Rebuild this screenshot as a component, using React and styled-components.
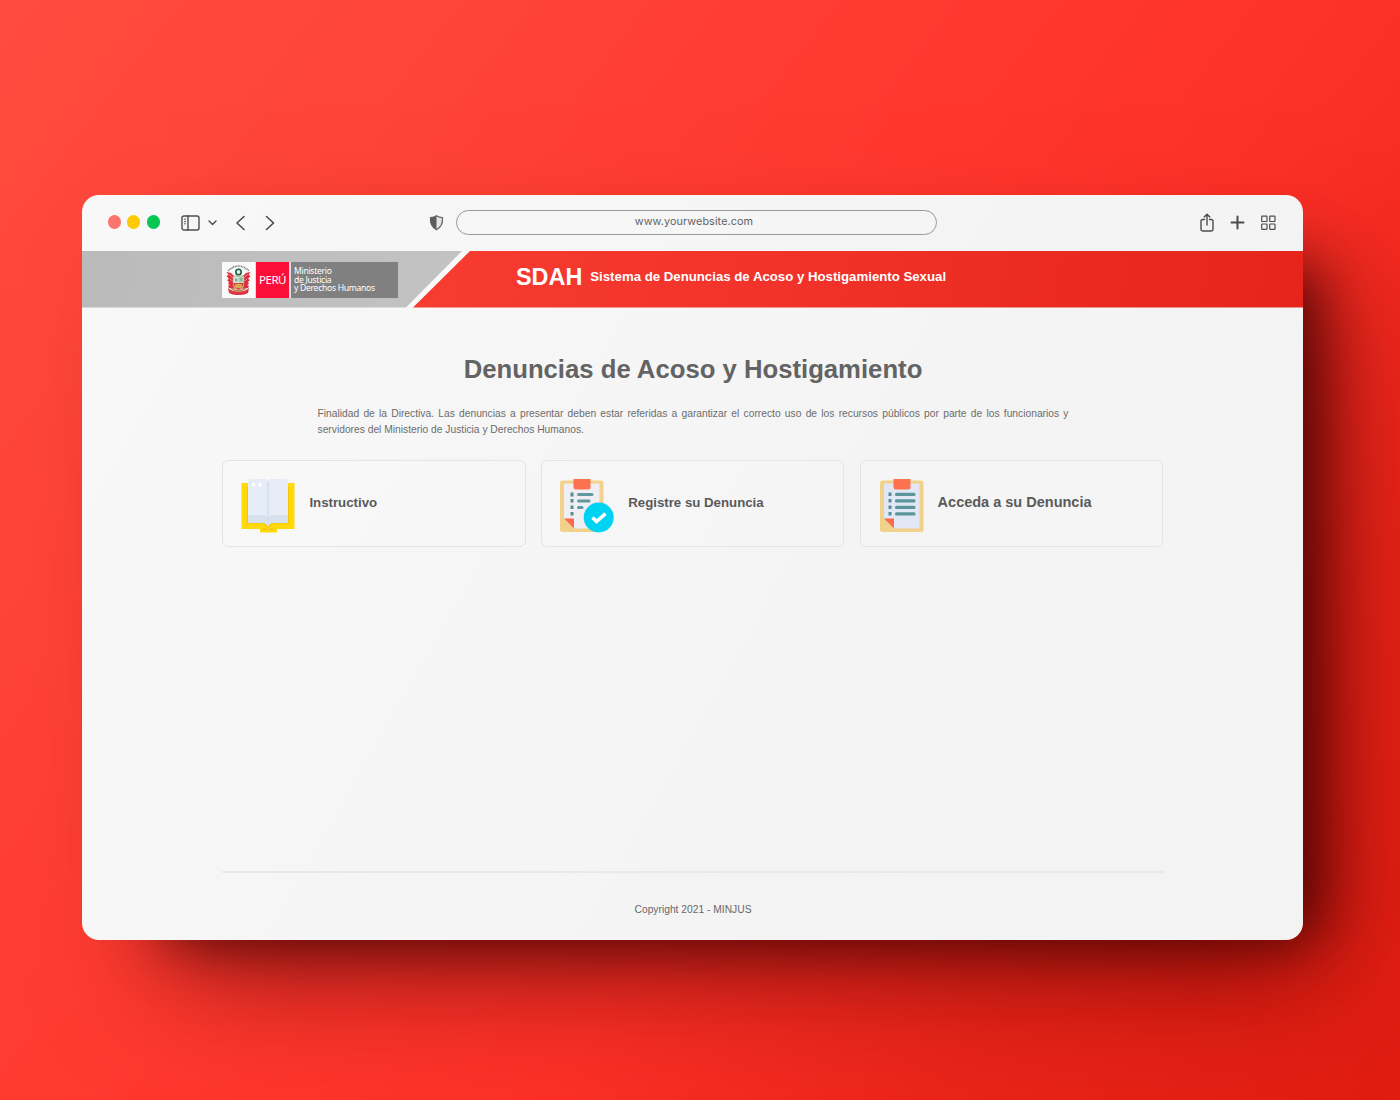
import React from "react";
import styled, { createGlobalStyle } from "styled-components";

const Global = createGlobalStyle`
  * { box-sizing: border-box; }
  body { margin: 0; font-family: "Liberation Sans", Arial, sans-serif; }
  svg { display: block; flex: none; }
`;

const Stage = styled.div`
  width: 1400px;
  height: 1100px;
  padding: 195px 97px 160px 82px;
  background: linear-gradient(128deg, #ff4c40 0%, #ff4438 20%, #ff382e 45%, #fd3027 62%, #ea2419 80%, #e01c11 100%);
  overflow: hidden;
`;

const Window = styled.div`
  display: flex;
  flex-direction: column;
  height: 745px;
  border-radius: 17px;
  overflow: hidden;
  background: linear-gradient(120deg, #f8f8f8 0%, #f6f6f6 35%, #f4f4f4 60%, #f3f3f3 100%);
  box-shadow: 50px 36px 56px -36px rgba(55, 0, 0, 0.8), 54px 60px 120px -34px rgba(80, 0, 0, 0.66);
`;

const Toolbar = styled.div`
  display: flex;
  align-items: center;
  height: 56px;
  padding: 0 27px 1px 25.5px;
  color: #4c4c4c;
`;

const Dots = styled.div`
  display: flex;
  gap: 6.5px;
  margin-right: 20.9px;
  padding-bottom: 1px;
`;

const Dot = styled.i`
  width: 13.2px;
  height: 13.2px;
  border-radius: 50%;
  background: ${(p) => p.$color};
`;

const Navigation = styled.div`
  display: flex;
  align-items: center;
  width: 248px;
`;

const Address = styled.div`
  display: flex;
  align-items: center;
  justify-content: center;
  width: 481px;
  height: 25px;
  margin: 0 0 1px 12px;
  padding-bottom: 1px;
  padding-right: 5px;
  border: 1.5px solid #989898;
  border-radius: 13px;
  color: #626262;
  font: 400 10.8px Inter, sans-serif;
  letter-spacing: 0.1px;
`;

const Actions = styled.div`
  display: flex;
  align-items: center;
  gap: 16px;
  margin-left: auto;
`;

const Header = styled.header`
  display: flex;
  height: 56.5px;
  flex: none;
  background: #f9f9f9;
`;

const Brand = styled.div`
  width: 380px;
  flex: none;
  padding: 11px 0 0 140px;
  background: linear-gradient(100deg, #bababa, #c3c3c3);
  clip-path: polygon(0 0, 100% 0, calc(100% - 56px) 100%, 0 100%);
`;

const Logo = styled.div`
  display: flex;
  width: 176px;
  height: 36px;
  background: #dedede;
`;

const Crest = styled.div`
  display: grid;
  place-items: center;
  width: 33px;
  background: #fafafa;
`;

const Country = styled.div`
  width: 33px;
  margin: 0 2px 0 1px;
  background: #fb0f38;
  color: #fff;
  font: 11.6px/36px "Noto Sans", sans-serif;
  letter-spacing: -0.5px;
  text-align: center;
`;

const Ministry = styled.div`
  flex: 1;
  padding: 5px 0 0 3px;
  background: #808080;
  color: #fff;
  font: 8.6px/8.7px "Noto Sans", sans-serif;
  letter-spacing: -0.3px;
  white-space: pre-line;
`;

const SystemBar = styled.div`
  display: flex;
  align-items: center;
  flex: 1;
  margin-left: -49px;
  padding: 0 0 4px 103px;
  gap: 8px;
  color: #fff;
  font-weight: 700;
  background: linear-gradient(100deg, #f83c30 0%, #f1332a 40%, #ea2a20 75%, #e6241b 100%);
  clip-path: polygon(57px 0, 100% 0, 100% 100%, 0 100%);
`;

const Acronym = styled.span`
  font-size: 23.4px;
`;

const SystemName = styled.span`
  padding-bottom: 1px;
  font-size: 13.23px;
`;

const Main = styled.main`
  display: flex;
  flex-direction: column;
  flex: 1;
  width: 942px;
  margin-left: 140px;
`;

const Title = styled.h1`
  margin: 46px 0 0;
  color: #636363;
  font-size: 25.7px;
  line-height: 30px;
  text-align: center;
`;

const Intro = styled.p`
  width: 751px;
  margin: 22.5px 0 0 95.5px;
  color: #6c6c6c;
  font-size: 10.27px;
  line-height: 15.5px;
  text-align: justify;
`;

const Cards = styled.div`
  display: grid;
  grid-template-columns: repeat(3, 303.5px);
  gap: 15.3px;
  margin-top: 22.5px;
`;

const Card = styled.a`
  display: flex;
  align-items: center;
  gap: 14px;
  height: 87px;
  padding: 5px 0 0 ${(p) => p.$inset || 18.4}px;
  border: 1.5px solid #e4e4e5;
  border-radius: 6px;
  background: rgba(255, 255, 255, 0.12);
`;

const Label = styled.span`
  padding-bottom: ${(p) => (p.$size ? 7.6 : 6)}px;
  color: #5a5a5a;
  font-weight: 700;
  font-size: ${(p) => p.$size || 13.25}px;
`;

const Footer = styled.footer`
  margin-top: auto;
  height: 69px;
  padding-top: 31px;
  border-top: 2px solid #e9e9e9;
  color: #686868;
  font-size: 10.27px;
  line-height: 12px;
  text-align: center;
`;

const Spacer = styled.span`
  width: ${(p) => p.$w}px;
`;

const Stroke = ({ w, h, sw = 1.5, children }) => (
  <svg width={w} height={h} viewBox={`0 0 ${w} ${h}`} fill="none" stroke="currentColor" strokeWidth={sw} strokeLinecap="round" strokeLinejoin="round">
    {children}
  </svg>
);

const PeruCrest = () => (
  <svg width="29" height="34" viewBox="0 0 29 34" fill="none">
    <path d="M4 8Q14.500-2 25 8" stroke="#777" strokeWidth="1.600" strokeDasharray="1 .6" />
    <path d="M2.500 9l4.500 1 4 4v12l-6-1-1-2 2-1-2-1 1-2-2-2 2-1-2.500-3 2-1zM26.500 9L22 10l-4 4v12l6-1 1-2-2-1 2-1-1-2 2-2-2-1 2.500-3-2-1z" fill="#df2d3d" />
    <path d="M5 11l5 5M6 16l4 3M24 11l-5 5M23 16l-4 3" stroke="#f6b0ae" strokeWidth=".7" />
    <path d="M9 13h11v8q0 5-5.500 7Q9 26 9 21z" fill="#d7e7df" stroke="#b27c54" strokeWidth=".7" />
    <path d="M14.500 13.500h5v6h-5z" fill="#a8cfb2" />
    <path d="M9.500 20h10q0 5-5 7-5-2-5-7z" fill="#d9363e" />
    <ellipse cx="14.500" cy="23" rx="4" ry="2.300" fill="#d9a64a" />
    <circle cx="14.500" cy="9" r="2.700" fill="#e7efe9" stroke="#12683c" strokeWidth="1.600" />
    <path d="M4 25q4.500 4 10.500 3.500Q20.500 29 25 25l-1 5q-4 2.500-9.500 2Q9 32.500 5 30z" fill="#dc3440" />
    <path d="M7 25.500q7 5 15 0" stroke="#b5853f" strokeWidth="1.300" />
    <path d="M12 15v4M11 17h3M17 15v3" stroke="#5b8f78" strokeWidth=".8" />
  </svg>
);

const Book = () => (
  <svg width="54" height="54" viewBox="-.5 0 54 54">
    <path d="M0 4h53v46H35.500v3.500h-17V50H0z" fill="#ffd90a" />
    <path d="M5.500 8h42v36.500H31L26.500 49 22 44.500H5.500z" fill="#f6c405" />
    <path d="M6.500 2q0-2 3-2h14q3 0 3 3 0-3 3-3h14q3 0 3 2v42H31q-3 0-4.500 4Q25 44 22 44H6.500z" fill="#e6edf7" />
    <path d="M6.500 36H22q3 0 4.500 3 1.500-3 4.500-3h15.500v8H31q-3 0-4.500 4Q25 44 22 44H6.500z" fill="#d7e1ee" />
    <path d="M25.700 2h1.600v43h-1.600z" fill="#d5deeb" />
    <rect x="10.500" y="3.500" width="3" height="4" rx="1.500" fill="#fff" />
    <rect x="17" y="3.500" width="3" height="4" rx="1.500" fill="#fff" />
    <path d="M19.500 49.500h4l3 1.800 3-1.800h4L31 51H22z" fill="#f2c306" />
  </svg>
);

const Clipboard = ({ checked }) => (
  <svg width={checked ? 54 : 44} height="54" viewBox={checked ? "0 .4 54 54" : "0 .4 44 54"}>
    <rect y="2" width="43.500" height="51.500" rx="2.500" fill="#f2d18a" />
    <path d="M4 5h35.500v45H14L4 40z" fill={checked ? "#eeeef3" : "#e2e7f6"} />
    <path d="M4 40h10v10z" fill="#fb6b4b" />
    <path d="M13.500 .4h17v8q0 2.500-2.500 2.500H16q-2.500 0-2.500-2.500z" fill="#fd714f" />
    {checked ? (
      <>
        <path d="M10.500 14h3v4h-3zM10.500 20.300h3v3.500h-3zM10.500 26.800h3v3.500h-3zM10.500 33.500h3v3.500h-3z" fill="#558e95" />
        <path d="M18.500 16H32M18.500 22.300H29M18.500 28.800H22" stroke="#6099a0" strokeWidth="3" strokeLinecap="round" />
        <circle cx="38.700" cy="38.900" r="15" fill="#00d3f2" />
        <path d="M32.500 39l4 4 9-8" fill="none" stroke="#fff" strokeWidth="3.500" />
      </>
    ) : (
      <>
        <path d="M8.500 14h3v3.500h-3zM8.500 20.500h3v3.500h-3zM8.500 27h3v3.500h-3zM8.500 33.500h3V37h-3z" fill="#558e95" />
        <path d="M16.500 15.800h17.500M16.500 22.300h17.500M16.500 28.800h17.500M16.500 35.300h17.500" stroke="#5c969d" strokeWidth="3.200" strokeLinecap="round" />
      </>
    )}
  </svg>
);

export default function App() {
  return (
    <>
      <Global />
      <Stage>
        <Window>
          <Toolbar>
            <Dots>
              <Dot $color="#fb756e" />
              <Dot $color="#fdca05" />
              <Dot $color="#08c654" />
            </Dots>
            <Navigation>
              <Stroke w={19} h={16} sw={1.4}>
                <rect x="1" y="1" width="17" height="14" rx="2" />
                <path d="M7 1v14" />
                <path d="M3.500 4.200h1M3.500 6.500h1M3.500 8.800h1" strokeWidth="1" />
              </Stroke>
              <Spacer $w={8} />
              <Stroke w={9} h={6} sw={1.4}><path d="M1 1l3.500 3.500L8 1" /></Stroke>
              <Spacer $w={18} />
              <Stroke w={11} h={16} sw={1.6}><path d="M9 1.500L2 8l7 6.500" /></Stroke>
              <Spacer $w={18} />
              <Stroke w={11} h={16} sw={1.6}><path d="M2.500 1.500l7 6.500-7 6.500" /></Stroke>
            </Navigation>
            <svg width="15" height="17" viewBox="0 0 15 17">
              <path d="M7.500 1.700Q10 3.500 13.500 3.700 14.200 12 7.500 15.700.8 12 1.500 3.700 5 3.500 7.500 1.700z" fill="#e4e4e4" stroke="#6a6a6a" strokeWidth="1.300" />
              <path d="M7.500 1.700v14Q.8 12 1.500 3.700 5 3.500 7.500 1.700z" fill="#5c5c5c" />
            </svg>
            <Address>www.yourwebsite.com</Address>
            <Actions>
              <Stroke w={14} h={19} sw={1.4}>
                <path d="M4.500 6.500H2.800Q1 6.500 1 8.300v8Q1 18 2.800 18h8.400Q13 18 13 16.300v-8q0-1.800-1.800-1.800H9.500M7 12V1.500M4.200 4L7 1.200 9.800 4" />
              </Stroke>
              <Stroke w={15} h={15} sw={2}><path d="M7.500 1.500v12M1.500 7.500h12" /></Stroke>
              <Stroke w={15} h={15} sw={1.2}>
                <rect x=".7" y="1.200" width="5.300" height="5.300" rx=".5" />
                <rect x="8.700" y="1.200" width="5.300" height="5.300" rx=".5" />
                <rect x=".7" y="9" width="5.300" height="5.300" rx=".5" />
                <rect x="8.700" y="9" width="5.300" height="5.300" rx=".5" />
              </Stroke>
            </Actions>
          </Toolbar>
          <Header>
            <Brand>
              <Logo>
                <Crest><PeruCrest /></Crest>
                <Country>PERÚ</Country>
                <Ministry>{"Ministerio\nde Justicia\ny Derechos Humanos"}</Ministry>
              </Logo>
            </Brand>
            <SystemBar>
              <Acronym>SDAH</Acronym>
              <SystemName>Sistema de Denuncias de Acoso y Hostigamiento Sexual</SystemName>
            </SystemBar>
          </Header>
          <Main>
            <Title>Denuncias de Acoso y Hostigamiento</Title>
            <Intro>
              Finalidad de la Directiva. Las denuncias a presentar deben estar referidas a garantizar el correcto uso de los recursos públicos por parte de los funcionarios y servidores del Ministerio de Justicia y Derechos Humanos.
            </Intro>
            <Cards>
              <Card><Book /><Label>Instructivo</Label></Card>
              <Card><Clipboard checked /><Label>Registre su Denuncia</Label></Card>
              <Card $inset={19}><Clipboard /><Label $size={14.5}>Acceda a su Denuncia</Label></Card>
            </Cards>
            <Footer>Copyright 2021 - MINJUS</Footer>
          </Main>
        </Window>
      </Stage>
    </>
  );
}
